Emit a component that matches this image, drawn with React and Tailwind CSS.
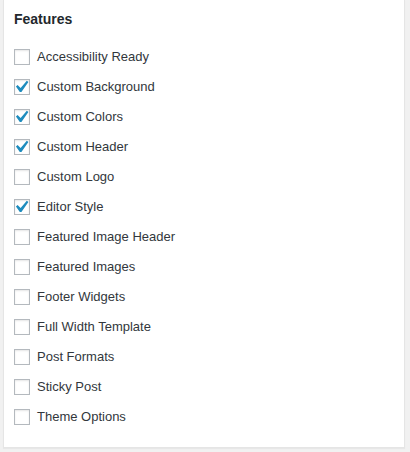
const features = [
  { label: "Accessibility Ready", checked: false },
  { label: "Custom Background", checked: true },
  { label: "Custom Colors", checked: true },
  { label: "Custom Header", checked: true },
  { label: "Custom Logo", checked: false },
  { label: "Editor Style", checked: true },
  { label: "Featured Image Header", checked: false },
  { label: "Featured Images", checked: false },
  { label: "Footer Widgets", checked: false },
  { label: "Full Width Template", checked: false },
  { label: "Post Formats", checked: false },
  { label: "Sticky Post", checked: false },
  { label: "Theme Options", checked: false },
];

function Checkbox({ checked }) {
  return (
    <span className="relative w-4 h-4 shrink-0 bg-white border border-[#b4b9be] shadow-[inset_0_1px_2px_rgba(0,0,0,0.1)]">
      {checked && (
        <svg viewBox="0 0 20 20" className="absolute -left-[6px] -top-[5px] w-[24px] h-[24px]" fill="#1e8cbe">
          <path d="M14.83 4.89l1.34.94-5.81 8.38H9.02L5.78 9.67l1.34-1.25 2.57 2.4z" />
        </svg>
      )}
    </span>
  );
}

export default function App() {
  return (
    <div className="h-[452px] bg-[#f1f1f1] pl-[3px] pr-[5px]" style={{ fontFamily: '"Liberation Sans", Arial, sans-serif' }}>
      <div className="h-[448px] bg-white border border-t-0 border-[#e5e5e5] shadow-[0_1px_1px_rgba(0,0,0,0.04)] pl-[10px]">
        <h2 className="pt-[10px] text-[14px] leading-[18px] font-semibold text-[#23282d]">Features</h2>
        <ul className="mt-[14px]">
          {features.map((f) => (
            <li key={f.label} className="flex items-center h-[30px] gap-[7px]">
              <Checkbox checked={f.checked} />
              <span className="text-[13px] text-[#32373c]">{f.label}</span>
            </li>
          ))}
        </ul>
      </div>
    </div>
  );
}
